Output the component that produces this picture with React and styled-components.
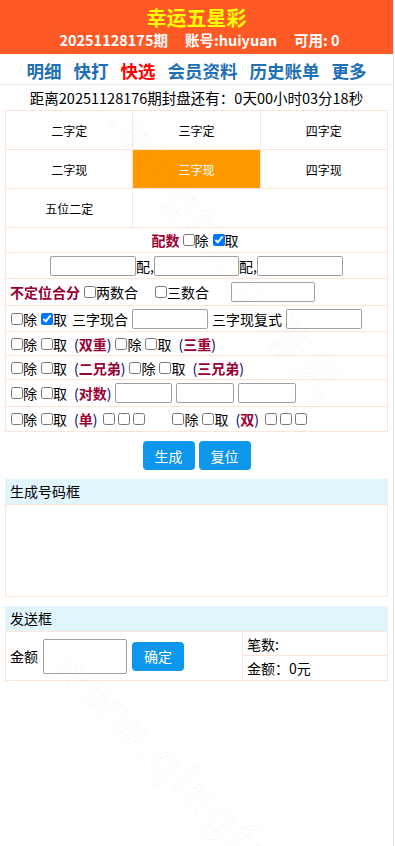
import React from "react";
import styled, { createGlobalStyle } from "styled-components";

const Global = createGlobalStyle`
  html, body { margin: 0; padding: 0; background: #fff; }
  body { font-family: "Noto Sans CJK SC", "Noto Sans", sans-serif; color: #000; }
  * { box-sizing: border-box; }
`;

const Page = styled.div`
  position: relative;
  width: 394px;
  min-height: 846px;
  border-right: 1px solid #e4e4ee;
  overflow: hidden;
`;

const Header = styled.header`
  background: #ff5a26;
  height: 54px;
  display: flex;
  flex-direction: column;
  align-items: center;
  justify-content: center;
  padding-top: 2px;
`;

const Title = styled.div`
  color: #ffff00;
  font-weight: bold;
  font-size: 20px;
  line-height: 24px;
`;

const Info = styled.div`
  color: #fff;
  font-weight: bold;
  font-size: 14.5px;
  line-height: 20px;
  display: flex;
  gap: 17px;
  padding-left: 6px;
`;

const Nav = styled.nav`
  height: 31px;
  display: flex;
  justify-content: center;
  align-items: center;
  gap: 12px;
  border-bottom: 1px solid #e8e8e8;
  padding-top: 2px;
`;

const NavLink = styled.a`
  font-size: 17.5px;
  font-weight: bold;
  color: ${(p) => (p.$active ? "#ff0000" : "#1d6fb6")};
  text-decoration: none;
`;

const Countdown = styled.div`
  text-align: center;
  font-size: 14.5px;
  line-height: 25px;
  height: 25px;
`;

const Body = styled.div`
  padding: 0 5px;
`;

const TabGrid = styled.div`
  display: grid;
  grid-template-columns: repeat(3, 1fr);
  border-top: 1px solid #fce5d8;
  border-left: 1px solid #fce5d8;
`;

const Tab = styled.div`
  height: 39px;
  display: flex;
  align-items: center;
  justify-content: center;
  font-size: 12px;
  border-right: 1px solid #fce5d8;
  border-bottom: 1px solid #fce5d8;
  background: ${(p) => (p.$active ? "#ff9900" : "transparent")};
  color: ${(p) => (p.$active ? "#fff" : "#000")};
`;

const EmptyTab = styled.div`
  grid-column: span 2;
  border-right: 1px solid #fce5d8;
  border-bottom: 1px solid #fce5d8;
`;

const Form = styled.div`
  border-left: 1px solid #fce5d8;
  border-right: 1px solid #fce5d8;
`;

const Row = styled.div`
  display: flex;
  align-items: center;
  justify-content: ${(p) => (p.$center ? "center" : "flex-start")};
  height: ${(p) => p.$h || 25}px;
  border-bottom: 1px solid #fce5d8;
  border-top: ${(p) => (p.$first ? "1px solid #fce5d8" : "none")};
  padding-left: ${(p) => (p.$center ? 0 : 4)}px;
  font-size: 14px;
  white-space: nowrap;
`;

const Label = styled.span`
  color: #990033;
  font-weight: bold;
  margin-right: ${(p) => p.$mr || 0}px;
`;

const Paren = styled.span`
  color: #000066;
  margin: 0 3px 0 4px;
  & > b {
    color: #990033;
    font-weight: bold;
  }
`;

const Check = styled.input.attrs({ type: "checkbox" })`
  width: 12px;
  height: 12px;
  margin: 0 0 0 ${(p) => p.$ml ?? 1}px;
`;

const Opt = styled.label`
  display: inline-flex;
  align-items: center;
  margin-right: ${(p) => p.$mr ?? 3}px;
`;

const Text = styled.span`
  margin: 0 ${(p) => p.$mr || 0}px 0 ${(p) => p.$ml || 0}px;
`;

const Field = styled.input`
  width: ${(p) => p.$w}px;
  height: ${(p) => p.$h || 20}px;
  border: 1px solid #a0a0a0;
  border-radius: 2px;
  margin-left: ${(p) => p.$ml || 0}px;
  margin-right: ${(p) => p.$mr || 0}px;
  padding: 0;
  outline: none;
`;

const Spacer = styled.span`
  display: inline-block;
  width: ${(p) => p.$w}px;
`;

const ButtonBar = styled.div`
  display: flex;
  justify-content: center;
  gap: 4px;
  padding: 9px 0;
`;

const Btn = styled.button`
  width: 52px;
  height: 29px;
  background: #0c96ec;
  color: #fff;
  border: none;
  border-radius: 4px;
  font-family: inherit;
  font-size: 14px;
  padding: 0;
`;

const BoxHead = styled.div`
  background: #e1f5fd;
  height: 25px;
  line-height: 25px;
  font-size: 14px;
  padding-left: 5px;
  margin-top: ${(p) => p.$mt || 0}px;
`;

const CodeBox = styled.div`
  height: 93px;
  border: 1px solid #fce5d8;
`;

const SendTable = styled.div`
  display: grid;
  grid-template-columns: 237px 1fr;
  border: 1px solid #fce5d8;
  height: 50px;
`;

const SendLeft = styled.div`
  display: flex;
  align-items: center;
  padding-left: 4px;
  font-size: 14px;
  border-right: 1px solid #fce5d8;
`;

const SendRight = styled.div`
  display: grid;
  grid-template-rows: 24px 1fr;
  font-size: 14px;
  & > div {
    display: flex;
    align-items: center;
    padding-left: 4px;
  }
  & > div:first-child {
    border-bottom: 1px solid #fce5d8;
  }
`;

const Watermark = styled.div`
  position: absolute;
  left: ${(p) => p.$x}px;
  top: ${(p) => p.$y}px;
  transform: rotate(${(p) => p.$r}deg);
  transform-origin: left top;
  font-family: "DejaVu Sans", sans-serif;
  font-size: 44px;
  letter-spacing: 4px;
  color: transparent;
  -webkit-text-stroke: 1px rgba(0, 0, 0, 0.045);
  white-space: nowrap;
  pointer-events: none;
`;

const tabs = ["二字定", "三字定", "四字定", "二字现", "三字现", "四字现", "五位二定"];

export default function App() {
  return (
    <>
      <Global />
      <Page>
        <Header>
          <Title>幸运五星彩</Title>
          <Info>
            <span>20251128175期</span>
            <span>账号:huiyuan</span>
            <span>可用: 0</span>
          </Info>
        </Header>
        <Nav>
          <NavLink>明细</NavLink>
          <NavLink>快打</NavLink>
          <NavLink $active>快选</NavLink>
          <NavLink>会员资料</NavLink>
          <NavLink>历史账单</NavLink>
          <NavLink>更多</NavLink>
        </Nav>
        <Countdown>距离20251128176期封盘还有：0天00小时03分18秒</Countdown>
        <Body>
          <TabGrid>
            {tabs.map((t) => (
              <Tab key={t} $active={t === "三字现"}>{t}</Tab>
            ))}
            <EmptyTab />
          </TabGrid>
          <Form>
            <Row $center>
              <Label $mr={2}>配数</Label>
              <Opt><Check />除</Opt>
              <Opt><Check defaultChecked />取</Opt>
            </Row>
            <Row $center $h={26}>
              <Field $w={86} />配,
              <Field $w={85} />配,
              <Field $w={86} />
            </Row>
            <Row $h={27}>
              <Label $mr={3}>不定位合分</Label>
              <Opt $mr={16}><Check />两数合</Opt>
              <Opt $mr={22}><Check />三数合</Opt>
              <Field $w={84} />
            </Row>
            <Row $h={26}>
              <Opt><Check />除</Opt>
              <Opt><Check defaultChecked />取</Opt>
              <Text $ml={2}>三字现合</Text>
              <Field $w={76} $ml={4} $mr={4} />
              <Text>三字现复式</Text>
              <Field $w={76} $ml={4} />
            </Row>
            <Row $h={24}>
              <Opt><Check />除</Opt>
              <Opt><Check />取</Opt>
              <Paren>(<b>双重</b>)</Paren>
              <Opt><Check />除</Opt>
              <Opt><Check />取</Opt>
              <Paren>(<b>三重</b>)</Paren>
            </Row>
            <Row $h={24}>
              <Opt><Check />除</Opt>
              <Opt><Check />取</Opt>
              <Paren>(<b>二兄弟</b>)</Paren>
              <Opt><Check />除</Opt>
              <Opt><Check />取</Opt>
              <Paren>(<b>三兄弟</b>)</Paren>
            </Row>
            <Row $h={27}>
              <Opt><Check />除</Opt>
              <Opt><Check />取</Opt>
              <Paren>(<b>对数</b>)</Paren>
              <Field $w={57} $ml={1} $mr={4} />
              <Field $w={58} $mr={4} />
              <Field $w={58} />
            </Row>
            <Row $h={25}>
              <Opt><Check />除</Opt>
              <Opt><Check />取</Opt>
              <Paren>(<b>单</b>)</Paren>
              <Check $ml={3} />
              <Check $ml={3} />
              <Check $ml={3} />
              <Spacer $w={26} />
              <Opt><Check />除</Opt>
              <Opt><Check />取</Opt>
              <Paren>(<b>双</b>)</Paren>
              <Check $ml={3} />
              <Check $ml={3} />
              <Check $ml={3} />
            </Row>
          </Form>
          <ButtonBar>
            <Btn>生成</Btn>
            <Btn>复位</Btn>
          </ButtonBar>
          <BoxHead>生成号码框</BoxHead>
          <CodeBox />
          <BoxHead $mt={9}>发送框</BoxHead>
          <SendTable>
            <SendLeft>
              金额
              <Field $w={84} $h={35} $ml={5} $mr={5} />
              <Btn>确定</Btn>
            </SendLeft>
            <SendRight>
              <div>笔数:</div>
              <div>金额：0元</div>
            </SendRight>
          </SendTable>
        </Body>
        <Watermark $x={70} $y={0} $r={53}>www.qingfeng 清风</Watermark>
        <Watermark $x={80} $y={640} $r={45}>www.qingfeng</Watermark>
      </Page>
    </>
  );
}
